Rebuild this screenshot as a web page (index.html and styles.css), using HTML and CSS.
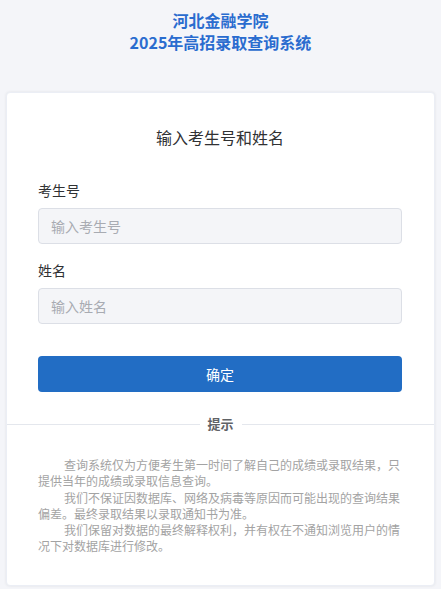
FILE: index.html
```html
<!DOCTYPE html>
<html lang="zh">
<head>
<meta charset="utf-8">
<title>2025年高招录取查询系统</title>
<link rel="stylesheet" href="styles.css">
</head>
<body>
<header class="site-title">
  <div>河北金融学院</div>
  <div>2025年高招录取查询系统</div>
</header>
<main class="card">
  <section class="form-area">
    <h2 class="card-heading">输入考生号和姓名</h2>
    <label class="field-label" for="ksh">考生号</label>
    <input class="field-input" id="ksh" type="text" placeholder="输入考生号">
    <label class="field-label second" for="xm">姓名</label>
    <input class="field-input" id="xm" type="text" placeholder="输入姓名">
    <button class="submit-btn" type="button">确定</button>
  </section>
  <div class="divider"><span class="divider-text">提示</span></div>
  <section class="notice">
    <p>查询系统仅为方便考生第一时间了解自己的成绩或录取结果，只提供当年的成绩或录取信息查询。</p>
    <p>我们不保证因数据库、网络及病毒等原因而可能出现的查询结果偏差。最终录取结果以录取通知书为准。</p>
    <p>我们保留对数据的最终解释权利，并有权在不通知浏览用户的情况下对数据库进行修改。</p>
  </section>
</main>
</body>
</html>
```
FILE: styles.css
```css
* { box-sizing: border-box; }
html, body { margin: 0; padding: 0; }
body {
  background: #f4f5f9;
  font-family: "Noto Sans CJK SC", "Noto Sans", sans-serif;
  color: #303133;
  width: 441px;
  height: 589px;
  overflow: hidden;
}
.site-title {
  padding-top: 9px;
  text-align: center;
  color: #2a6ccf;
  font-weight: 700;
  font-size: 16px;
  line-height: 22px;
}
.card {
  margin: 39px 6px 0;
  background: #fff;
  border-radius: 4px;
  box-shadow: 0 0 3px rgba(0,0,0,0.08);
  border: 1px solid #ebeef5;
  padding-bottom: 30px;
}
.form-area {
  padding: 33px 32px 0 31px;
  display: flex;
  flex-direction: column;
}
.card-heading {
  margin: 0 0 32px;
  text-align: center;
  font-size: 16px;
  font-weight: 400;
  line-height: 22px;
  color: #303133;
}
.field-label {
  font-size: 14px;
  line-height: 20px;
  color: #303133;
  margin-bottom: 8px;
}
.field-label.second { margin-top: 16px; }
.field-input {
  height: 36px;
  border: 1px solid #dcdfe6;
  border-radius: 4px;
  background: #f4f5f8;
  padding: 0 12px;
  font-family: inherit;
  font-size: 14px;
  color: #303133;
  outline: none;
}
.field-input::placeholder { color: #a8abb2; }
.submit-btn {
  margin-top: 32px;
  height: 36px;
  border: none;
  border-radius: 4px;
  background: #226dc4;
  color: #fff;
  font-family: inherit;
  font-size: 14px;
}
.divider {
  margin-top: 23px;
  display: flex;
  align-items: center;
  gap: 8px;
}
.divider::before, .divider::after {
  content: "";
  flex: 1;
  height: 1px;
  background: #e4e7ed;
}
.divider-text {
  font-size: 13px;
  font-weight: 700;
  color: #606266;
  line-height: 18px;
}
.notice {
  padding: 24px 32px 0 31px;
  font-size: 12px;
  line-height: 16.3px;
  color: #a3a3a3;
}
.notice p { margin: 0; text-indent: 26px; }
```
